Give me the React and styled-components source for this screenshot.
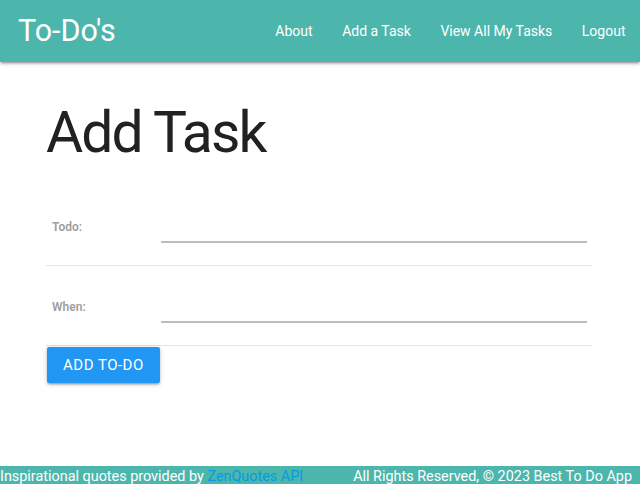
import React from 'react';
import styled, { createGlobalStyle } from 'styled-components';

const TEAL = '#4db6ac';

const GlobalStyle = createGlobalStyle`
  html, body {
    margin: 0;
    padding: 0;
    background: #fff;
    font-family: Roboto, "Liberation Sans", sans-serif;
    color: rgba(0, 0, 0, 0.87);
    overflow: hidden;
  }
  * {
    box-sizing: border-box;
  }
`;

const Nav = styled.nav`
  display: flex;
  align-items: center;
  justify-content: space-between;
  height: 62px;
  padding: 0 0 0 18px;
  background-color: ${TEAL};
  color: #fff;
  box-shadow: 0 2px 2px 0 rgba(0, 0, 0, 0.14), 0 3px 1px -2px rgba(0, 0, 0, 0.12),
    0 1px 5px 0 rgba(0, 0, 0, 0.2);
  position: relative;
  z-index: 2;
`;

const Brand = styled.a`
  font-size: 30.5px;
  color: #fff;
  text-decoration: none;
  line-height: 1;
`;

const NavLinks = styled.ul`
  display: flex;
  list-style: none;
  margin: 0;
  padding: 0;

  li a {
    display: block;
    padding: 0 14.5px 0 15px;
    font-size: 14px;
    color: #fff;
    text-decoration: none;
  }
`;

const Main = styled.main`
  height: 404px;
  padding: 0 0 0 46px;
`;

const Title = styled.h1`
  margin: 0;
  padding-top: 40px;
  height: 124px;
  font-size: 57px;
  font-weight: 400;
  line-height: 110%;
  letter-spacing: -1.9px;
  color: #212121;
`;

const Form = styled.form`
  width: 546px;
`;

const Row = styled.div`
  display: grid;
  grid-template-columns: 115px 1fr;
  height: 80px;
  border-bottom: 1px solid #e4e4e4;
`;

const Label = styled.label`
  align-self: center;
  padding: 3px 0 0 6px;
  font-size: 12px;
  font-weight: 600;
  color: #9e9e9e;
`;

const InputCell = styled.div`
  padding: 9px 5px 0 0;
`;

const TextInput = styled.input`
  display: block;
  width: 100%;
  height: 48px;
  border: none;
  border-bottom: 2px solid #bdbdbd;
  outline: none;
  background: transparent;
  font: inherit;
  font-size: 16px;
`;

const Button = styled.button`
  margin: 1px 0 0 1px;
  height: 36px;
  padding: 0 16px;
  border: none;
  border-radius: 2px;
  background-color: #2196f3;
  color: #fff;
  font-family: Roboto, "Liberation Sans", sans-serif;
  font-size: 15px;
  letter-spacing: 0.5px;
  text-transform: uppercase;
  box-shadow: 0 2px 2px 0 rgba(0, 0, 0, 0.14), 0 3px 1px -2px rgba(0, 0, 0, 0.12),
    0 1px 5px 0 rgba(0, 0, 0, 0.2);
  cursor: pointer;
`;

const Footer = styled.footer`
  display: flex;
  justify-content: space-between;
  height: 40px;
  padding: 1px 8px 0 0;
  background-color: ${TEAL};
  color: #fff;
  font-size: 14.4px;
  line-height: 19px;

  a {
    color: #039be5;
    text-decoration: none;
  }
`;

export default function App() {
  return (
    <>
      <GlobalStyle />
      <Nav>
        <Brand href="#">To-Do's</Brand>
        <NavLinks>
          <li><a href="#">About</a></li>
          <li><a href="#">Add a Task</a></li>
          <li><a href="#">View All My Tasks</a></li>
          <li><a href="#">Logout</a></li>
        </NavLinks>
      </Nav>
      <Main>
        <Title>Add Task</Title>
        <Form onSubmit={e => e.preventDefault()}>
          <Row>
            <Label htmlFor="todo">Todo:</Label>
            <InputCell>
              <TextInput id="todo" type="text" />
            </InputCell>
          </Row>
          <Row>
            <Label htmlFor="when">When:</Label>
            <InputCell>
              <TextInput id="when" type="text" />
            </InputCell>
          </Row>
          <Button type="submit">Add To-Do</Button>
        </Form>
      </Main>
      <Footer>
        <span>
          Inspirational quotes provided by <a href="#">ZenQuotes API</a>
        </span>
        <span>All Rights Reserved, © 2023 Best To Do App</span>
      </Footer>
    </>
  );
}
